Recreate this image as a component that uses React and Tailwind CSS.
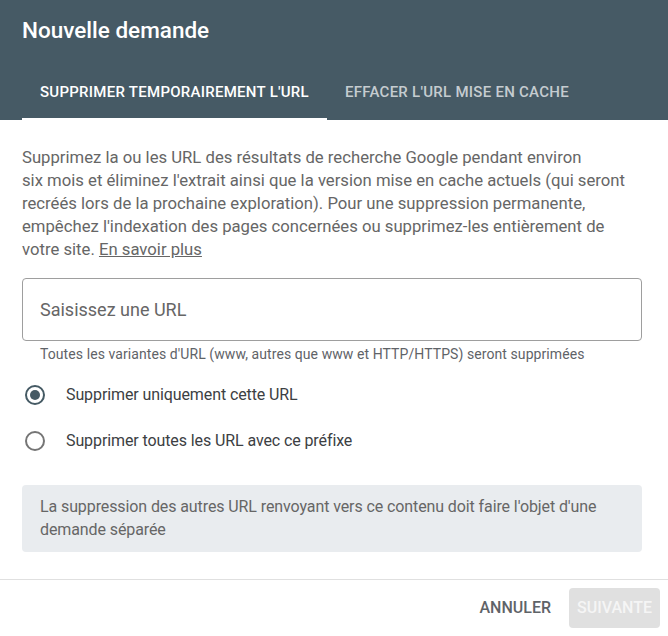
export default function App() {
  const font = { fontFamily: "Roboto, 'Noto Sans', sans-serif" };
  return (
    <div className="w-[668px] h-[636px] bg-white flex flex-col overflow-hidden" style={font}>
      <div className="bg-[#465a65] h-[120px] flex flex-col">
        <div className="h-[66px] pl-[22px] pt-[15px]">
          <h1 className="text-[22.5px] leading-[30px] font-medium text-white">Nouvelle demande</h1>
        </div>
        <div className="flex pl-[22px] h-[54px]">
          <div className="px-[18px] flex items-center border-b-2 border-white text-[15px] font-medium text-white tracking-[0.27px]">
            SUPPRIMER TEMPORAIREMENT L'URL
          </div>
          <div className="px-[18px] flex items-center border-b-2 border-transparent text-[15px] font-medium text-[#c5ccd0] tracking-[0.27px]">
            EFFACER L'URL MISE EN CACHE
          </div>
        </div>
      </div>
      <div className="px-[22px] pt-[26px] flex-1">
        <p className="text-[16.7px] leading-[23px] text-[#666666] whitespace-nowrap">
          Supprimez la ou les URL des résultats de recherche Google pendant environ<br />
          six mois et éliminez l'extrait ainsi que la version mise en cache actuels (qui seront<br />
          recréés lors de la prochaine exploration). Pour une suppression permanente,<br />
          empêchez l'indexation des pages concernées ou supprimez-les entièrement de<br />
          votre site. <a className="underline text-[#666666]">En savoir plus</a>
        </p>
        <div className="mt-[17px] w-[620px] h-[63px] border border-[#9e9e9e] rounded-[4px] flex items-center pl-[17px]">
          <span className="text-[18px] text-[#666666]">Saisissez une URL</span>
        </div>
        <div className="pl-[18px] mt-[4px] text-[14px] leading-[18px] text-[#5f6368] tracking-[0.08px]">
          Toutes les variantes d'URL (www, autres que www et HTTP/HTTPS) seront supprimées
        </div>
        <div className="mt-[9px] flex flex-col">
          <div className="h-[46px] flex items-center">
            <div className="w-[20px] h-[20px] ml-[3px] rounded-full border-2 border-[#455a64] flex items-center justify-center">
              <div className="w-[10px] h-[10px] rounded-full bg-[#455a64]" />
            </div>
            <span className="ml-[21px] text-[16px] text-[#3c4043] tracking-[-0.1px]">Supprimer uniquement cette URL</span>
          </div>
          <div className="h-[46px] flex items-center">
            <div className="w-[20px] h-[20px] ml-[3px] rounded-full border-2 border-[#757575]" />
            <span className="ml-[21px] text-[16px] text-[#3c4043] tracking-[-0.1px]">Supprimer toutes les URL avec ce préfixe</span>
          </div>
        </div>
        <div className="mt-[21px] w-[620px] h-[67px] bg-[#e9ecef] rounded-[4px] pl-[18px] pt-[10px] text-[16px] leading-[23px] text-[#666666] tracking-[-0.1px]">
          La suppression des autres URL renvoyant vers ce contenu doit faire l'objet d'une<br />
          demande séparée
        </div>
      </div>
      <div className="border-t border-[#e0e0e0] h-[57px] flex items-center justify-end pr-[8px]">
        <button className="h-[40px] px-[12px] text-[16px] font-medium text-[#5f6368]">ANNULER</button>
        <button className="ml-[6px] h-[40px] w-[91px] rounded-[4px] bg-[#e0e0e0] text-[16px] font-medium text-[#f5f5f5]">SUIVANTE</button>
      </div>
    </div>
  );
}
